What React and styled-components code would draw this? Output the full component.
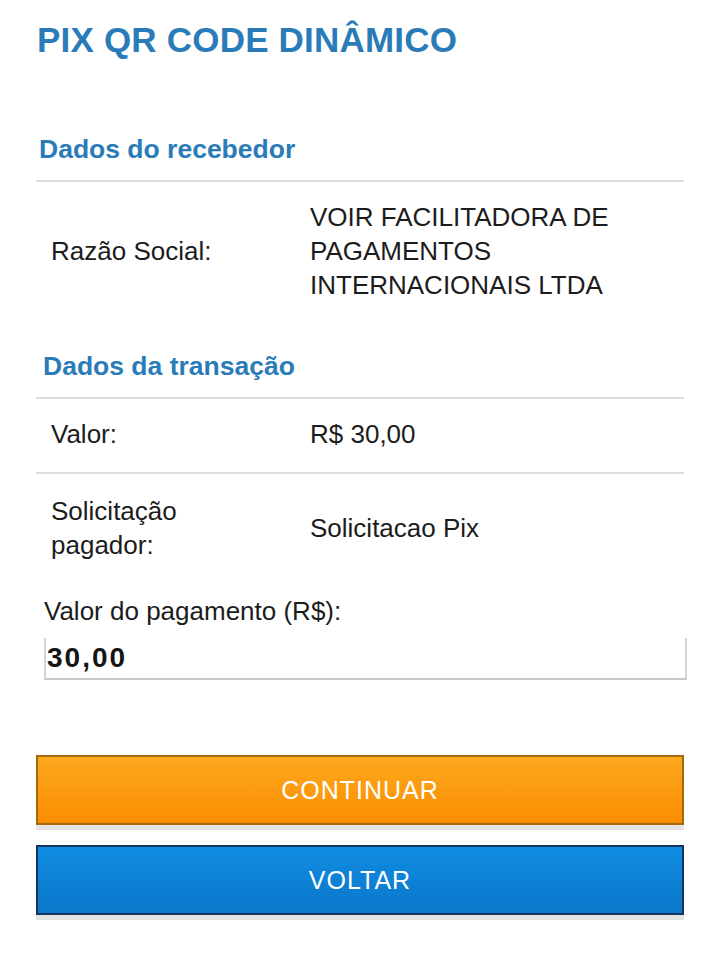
import React from 'react';
import styled, { createGlobalStyle } from 'styled-components';

const GlobalStyle = createGlobalStyle`
  body {
    margin: 0;
    background: #ffffff;
    font-family: "Liberation Sans", Arial, sans-serif;
    color: #1c1c1c;
  }
`;

const Page = styled.div`
  padding: 17px 36px 40px 36px;
`;

const Title = styled.h1`
  margin: 0 0 0 1px;
  font-size: 35px;
  font-weight: 700;
  color: #2a7cb9;
  line-height: 46px;
  letter-spacing: 0.2px;
`;

const SectionTitle = styled.h2`
  margin: ${p => p.$top}px 0 0 ${p => p.$indent}px;
  font-size: 26.5px;
  font-weight: 700;
  color: #2a7cb9;
  line-height: 32px;
  padding-bottom: 15px;
`;

const Table = styled.div`
  border-top: 2px solid #dcdcdc;
`;

const Row = styled.div`
  display: grid;
  grid-template-columns: 274px 1fr;
  align-items: center;
  padding: ${p => p.$pad};
  border-bottom: ${p => (p.$line ? '2px solid #dcdcdc' : 'none')};
`;

const Label = styled.div`
  padding: 0 40px 0 15px;
  font-size: 26px;
  line-height: 34px;
  color: #1c1c1c;
`;

const Value = styled.div`
  font-size: 26px;
  line-height: 34px;
  color: #1c1c1c;
`;

const Field = styled.div`
  margin: 32px 0 0 8px;
`;

const FieldLabel = styled.label`
  display: block;
  font-size: 26px;
  line-height: 34px;
  color: #1c1c1c;
`;

const Input = styled.input`
  display: block;
  box-sizing: border-box;
  width: 643px;
  height: 42px;
  margin-top: 10px;
  padding: 0 0 0 1px;
  border: none;
  border-left: 2px solid #d4d4d4;
  border-right: 2px solid #d4d4d4;
  border-bottom: 2px solid #c8c8c8;
  font-family: "Liberation Sans", Arial, sans-serif;
  font-size: 28px;
  font-weight: 700;
  letter-spacing: 2px;
  color: #151515;
  background: #fff;
  outline: none;
`;

const Buttons = styled.div`
  display: flex;
  flex-direction: column;
  gap: 20px;
  margin-top: 75px;
`;

const Button = styled.button`
  box-sizing: border-box;
  width: 100%;
  height: 70px;
  font-family: "Liberation Sans", Arial, sans-serif;
  font-size: 25px;
  color: #ffffff;
  letter-spacing: 1px;
  cursor: pointer;
  border: 2px solid ${p => p.$border};
  background: linear-gradient(to bottom, ${p => p.$from}, ${p => p.$to});
  box-shadow: 0 5px 0 #e4e4e4;
`;

export default function App() {
  return (
    <>
      <GlobalStyle />
      <Page>
        <Title>PIX QR CODE DINÂMICO</Title>

        <SectionTitle $top={70} $indent={3}>Dados do recebedor</SectionTitle>
        <Table>
          <Row $pad="18px 0 0 0">
            <Label>Razão Social:</Label>
            <Value>VOIR FACILITADORA DE PAGAMENTOS INTERNACIONAIS LTDA</Value>
          </Row>
        </Table>

        <SectionTitle $top={48} $indent={7}>Dados da transação</SectionTitle>
        <Table>
          <Row $pad="18px 0 21px 0" $line>
            <Label>Valor:</Label>
            <Value>R$ 30,00</Value>
          </Row>
          <Row $pad="20px 0 0 0">
            <Label>Solicitação pagador:</Label>
            <Value>Solicitacao Pix</Value>
          </Row>
        </Table>

        <Field>
          <FieldLabel>Valor do pagamento (R$):</FieldLabel>
          <Input defaultValue="30,00" />
        </Field>

        <Buttons>
          <Button $from="#fda91e" $to="#fb8c02" $border="#a5680f">CONTINUAR</Button>
          <Button $from="#0f8ce0" $to="#0c77cb" $border="#17355c">VOLTAR</Button>
        </Buttons>
      </Page>
    </>
  );
}
